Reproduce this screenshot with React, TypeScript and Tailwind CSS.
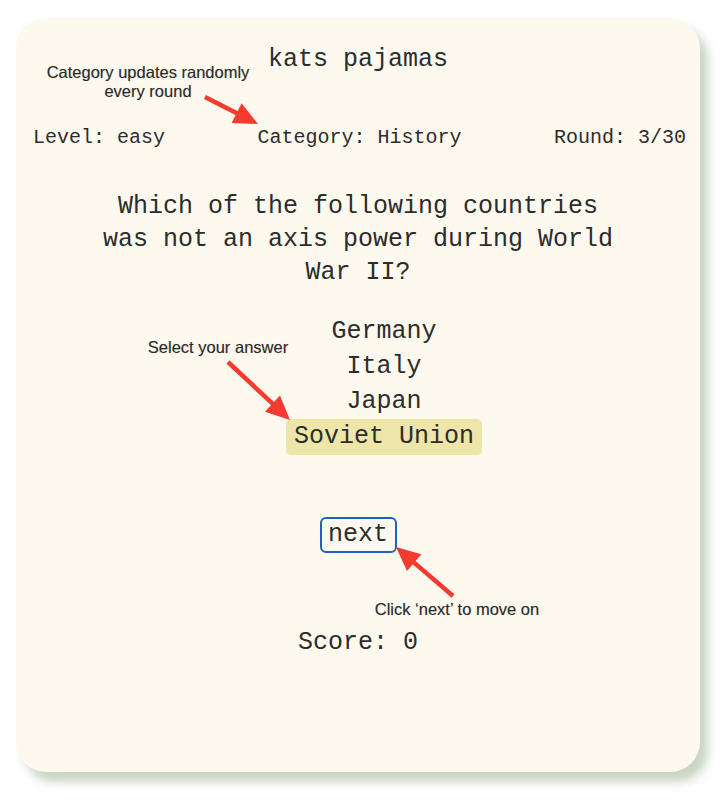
import React from 'react';

const mono = { fontFamily: '"Liberation Mono", "DejaVu Sans Mono", monospace' };

const answers = ['Germany', 'Italy', 'Japan', 'Soviet Union'];

function Arrow({ x1, y1, x2, y2 }: { x1: number; y1: number; x2: number; y2: number }) {
  const dx = x2 - x1;
  const dy = y2 - y1;
  const len = Math.hypot(dx, dy);
  const ux = dx / len;
  const uy = dy / len;
  const head = 24;
  const half = 11;
  const bx = x2 - ux * head;
  const by = y2 - uy * head;
  const pts = `${x2},${y2} ${bx - uy * half},${by + ux * half} ${bx + uy * half},${by - ux * half}`;
  return (
    <g>
      <line x1={x1} y1={y1} x2={bx + ux * 2} y2={by + uy * 2} stroke="#f53b30" strokeWidth={4.5} strokeLinecap="butt" />
      <polygon points={pts} fill="#f53b30" />
    </g>
  );
}

function Note({ className, children }: { className: string; children: React.ReactNode }) {
  return (
    <div
      className={`absolute text-center text-[16.5px] leading-[19px] text-[#2b2b2b] ${className}`}
      style={{ fontFamily: '"Liberation Sans", Arial, sans-serif', textShadow: '0 0 1px rgba(0,0,0,0.25)' }}
    >
      {children}
    </div>
  );
}

export default function App() {
  const selected = 'Soviet Union';
  return (
    <div className="relative h-[802px] w-[728px] bg-white">
      <div className="pl-4 pt-[18px]">
        <div
          className="flex h-[754px] w-[684px] flex-col items-center rounded-[30px] bg-[#fdf9ee] pt-[27px] text-[#2c2c2c] shadow-[8px_10px_10px_rgba(160,178,150,0.55)]"
          style={mono}
        >
          <h1 className="text-[25px] leading-[30px]">kats pajamas</h1>

          <div className="mt-[51px] flex w-full justify-between pl-[17px] pr-[14px] text-[20px] leading-[24px]">
            <span>Level: easy</span>
            <span>Category: History</span>
            <span>Round: 3/30</span>
          </div>

          <p className="mt-[40px] w-[520px] text-center text-[25px] leading-[33px]">
            Which of the following countries was not an axis power during World War II?
          </p>

          <ul className="mt-[25px] flex flex-col items-center pl-[52px] text-[25px] leading-[35px]">
            {answers.map((a) => (
              <li
                key={a}
                className={a === selected ? 'rounded-[5px] bg-[#ede6a8] px-2 leading-[36px]' : ''}
              >
                {a}
              </li>
            ))}
          </ul>

          <button className="mt-[62px] h-[36px] w-[77px] rounded-[6px] border-2 border-[#1a62c8] text-[25px] leading-[30px]" style={mono}>
            next
          </button>

          <p className="mt-[75px] text-[25px] leading-[30px]">Score: 0</p>
        </div>
      </div>

      <Note className="left-[40px] top-[63px] w-[216px]">
        Category updates randomly
        <br />
        every round
      </Note>
      <Note className="left-[140px] top-[338px] w-[156px]">Select your answer</Note>
      <Note className="left-[364px] top-[600px] w-[186px]">Click ‘next’ to move on</Note>

      <svg className="pointer-events-none absolute inset-0" width={728} height={802}>
        <Arrow x1={205} y1={97} x2={258} y2={124} />
        <Arrow x1={228} y1={362} x2={290} y2={420} />
        <Arrow x1={453} y1={596} x2={396} y2={547} />
      </svg>
    </div>
  );
}
